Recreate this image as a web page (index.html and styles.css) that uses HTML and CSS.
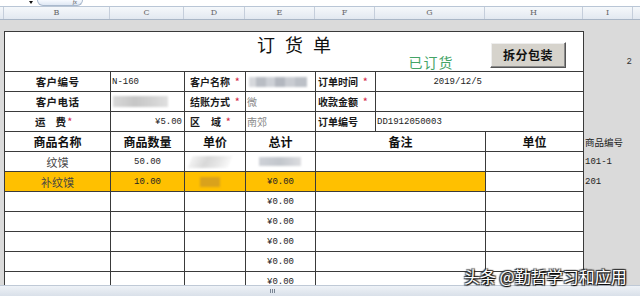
FILE: index.html
```html
<!DOCTYPE html>
<html lang="zh">
<head>
<meta charset="utf-8">
<title>订货单</title>
<link rel="stylesheet" href="styles.css">
</head>
<body>
<div class="app">
  <div class="fbar">
    <span class="nb-arrow"></span>
    <div class="fx-pill"><span class="fx">fx</span></div>
  </div>
  <div class="colhead">
    <div class="ch w-a"></div>
    <div class="ch w-b">B</div>
    <div class="ch w-c">C</div>
    <div class="ch w-d">D</div>
    <div class="ch w-e">E</div>
    <div class="ch w-f">F</div>
    <div class="ch w-g">G</div>
    <div class="ch w-h">H</div>
    <div class="ch w-i">I</div>
    <div class="ch w-j"></div>
  </div>
  <div class="sheet">
    <div class="gutter"></div>
    <div class="form">
      <div class="c title">订货单</div>
      <div class="status">已订货</div>
      <div class="btn-cell"><button class="btn">拆分包装</button></div>

      <div class="c lbl center">客户编号</div>
      <div class="c val mono">N-160</div>
      <div class="c lbl2">客户名称<i class="req">*</i></div>
      <div class="c val"><span class="blur blur-name"></span></div>
      <div class="c lbl3">订单时间<i class="req">*</i></div>
      <div class="c val mono span2 date">2019/12/5</div>

      <div class="c lbl center">客户电话</div>
      <div class="c val"><span class="blur blur-phone"></span></div>
      <div class="c lbl2">结账方式<i class="req">*</i></div>
      <div class="c val soft">微</div>
      <div class="c lbl3">收款金额<i class="req">*</i></div>
      <div class="c val span2"></div>

      <div class="c lbl freight"><span class="sp1">运</span>费<i class="req tight">*</i></div>
      <div class="c val mono right">¥5.00</div>
      <div class="c lbl2"><span class="sp2">区</span>域<i class="req">*</i></div>
      <div class="c val soft">南郊</div>
      <div class="c lbl3">订单编号</div>
      <div class="c val mono span2">DD1912050003</div>

      <div class="c head">商品名称</div>
      <div class="c head">商品数量</div>
      <div class="c head">单价</div>
      <div class="c head">总计</div>
      <div class="c head span2">备注</div>
      <div class="c head">单位</div>

      <div class="c data">纹馍</div>
      <div class="c data mono">50.00</div>
      <div class="c data"><span class="blur blur-price"></span></div>
      <div class="c data"><span class="blur blur-total"></span></div>
      <div class="c data span2"></div>
      <div class="c data"></div>

      <div class="c data hl">补纹馍</div>
      <div class="c data mono hl">10.00</div>
      <div class="c data hl"><span class="blur blur-price2"></span></div>
      <div class="c data mono hl">¥0.00</div>
      <div class="c data span2 hl"></div>
      <div class="c data"></div>

      <div class="c data"></div><div class="c data"></div><div class="c data"></div>
      <div class="c data mono">¥0.00</div><div class="c data span2"></div><div class="c data"></div>

      <div class="c data"></div><div class="c data"></div><div class="c data"></div>
      <div class="c data mono">¥0.00</div><div class="c data span2"></div><div class="c data"></div>

      <div class="c data"></div><div class="c data"></div><div class="c data"></div>
      <div class="c data mono">¥0.00</div><div class="c data span2"></div><div class="c data"></div>

      <div class="c data"></div><div class="c data"></div><div class="c data"></div>
      <div class="c data mono">¥0.00</div><div class="c data span2"></div><div class="c data"></div>

      <div class="c data"></div><div class="c data"></div><div class="c data"></div>
      <div class="c data mono">¥0.00</div><div class="c data span2"></div><div class="c data"></div>
    </div>
    <div class="side">
      <div class="s-top"></div>
      <div class="s-num">2</div>
      <div></div>
      <div></div>
      <div></div>
      <div class="s-txt">商品编号</div>
      <div class="s-txt mono">101-1</div>
      <div class="s-txt mono">201</div>
    </div>
  </div>
  <div class="hscroll"><span class="grip"></span></div>
  <div class="watermark">头条 @勤哲学习和应用</div>
</div>
</body>
</html>
```

FILE: styles.css
```css
* { box-sizing: border-box; margin: 0; padding: 0; }

html, body {
  width: 640px;
  height: 296px;
  overflow: hidden;
  background: #dadada;
}

body {
  font-family: "Noto Sans CJK SC", "Noto Sans", sans-serif;
  color: #111;
}

.app {
  position: relative;
  width: 640px;
  height: 296px;
  display: flex;
  flex-direction: column;
}

/* formula bar strip */
.fbar {
  height: 7px;
  background: #fff;
  border-bottom: 1px solid #b9c6d6;
  display: flex;
  align-items: flex-start;
}
.nb-arrow {
  width: 0;
  height: 0;
  margin: 1px 0 0 29px;
  border-top: 3px solid #111;
  border-left: 2.5px solid transparent;
  border-right: 2.5px solid transparent;
}
.fx-pill {
  margin-left: 4px;
  width: 46px;
  height: 6px;
  border: 1px solid #a9b9cd;
  border-top: none;
  border-radius: 0 0 7px 7px;
  background: linear-gradient(#f7faff, #dfe8f4);
  display: flex;
  justify-content: flex-end;
  align-items: center;
}
.fx {
  font: italic 6px/5px "Liberation Serif", serif;
  color: #555;
  margin-right: 5px;
}

/* column header row */
.colhead {
  height: 13px;
  display: flex;
  background: linear-gradient(#f5f8fb, #e2e8f0);
  border-bottom: 1px solid #a9b6c6;
}
.ch {
  border-right: 1px solid #c5cedb;
  font: 8px/12px "DejaVu Serif", serif;
  color: #666;
  text-align: center;
}
.w-a { width: 4px; }
.w-b { width: 106px; }
.w-c { width: 74px; }
.w-d { width: 61px; }
.w-e { width: 70px; }
.w-f { width: 60px; }
.w-g { width: 110px; }
.w-h { width: 98px; }
.w-i { width: 50px; }
.w-j { width: 7px; border-right: none; }

/* sheet area */
.sheet {
  height: 265px;
  padding-top: 11px;
  display: flex;
  align-items: flex-start;
  overflow: hidden;
  background: #dadada;
}
.gutter { width: 4px; flex: none; }

.form {
  flex: none;
  width: 580px;
  display: grid;
  grid-template-columns: 106px 74px 61px 70px 60px 110px 98px;
  grid-template-rows: 40px repeat(12, 20px);
  border-left: 1px solid #3a3a3a;
  border-top: 1px solid #3a3a3a;
  background: #fff;
}

.c {
  border-right: 1px solid #3a3a3a;
  border-bottom: 1px solid #3a3a3a;
  display: flex;
  align-items: center;
  white-space: nowrap;
  overflow: hidden;
  font-size: 10px;
}
.span2 { grid-column: span 2; }

.title {
  grid-row: 1;
  grid-column: 1 / -1;
  align-items: flex-start;
  justify-content: center;
  overflow: visible;
  padding: 1px 0 0 10px;
  font-size: 18px;
  line-height: 22px;
  letter-spacing: 10px;
  color: #111;
}
.status {
  grid-row: 1;
  grid-column: 6;
  align-self: end;
  justify-self: center;
  margin-bottom: 2px;
  font-size: 14px;
  line-height: 16px;
  letter-spacing: 1px;
  color: #44a466;
}
.btn-cell {
  grid-row: 1;
  grid-column: 7;
  padding: 9px 0 0 4px;
}
.btn {
  width: 76px;
  height: 26px;
  background: #d6d3cc;
  border: 1px solid;
  border-color: #ffffff #555 #555 #ffffff;
  box-shadow: inset -1px -1px 0 #8a8a8a, inset 1px 1px 0 #eeeeee;
  font-family: "Noto Sans CJK SC", sans-serif;
  font-weight: 700;
  font-size: 12px;
  letter-spacing: 0.5px;
  color: #111;
}

/* info labels */
.lbl { font-weight: 700; font-size: 10.5px; letter-spacing: 0.4px; color: #1a1a1a; }
.center { justify-content: center; }
.lbl2 { font-weight: 700; padding-left: 5px; font-size: 10px; color: #1a1a1a; }
.lbl3 { font-weight: 700; padding-left: 2px; font-size: 10px; color: #1a1a1a; }
.freight { padding-left: 30px; }
.sp1 { letter-spacing: 10px; }
.sp2 { letter-spacing: 11px; }
.req {
  font-style: normal;
  color: #d6304f;
  font-size: 9px;
  margin-left: 5px;
  font-weight: 700;
}
.req.tight { margin-left: 1px; }

.val { font-size: 10px; color: #333; padding-left: 1px; }
.mono { font-family: "Liberation Mono", "DejaVu Sans Mono", monospace; font-size: 9px; color: #222; }
.right { justify-content: flex-end; padding-right: 2px; }
.date { justify-content: flex-end; padding-right: 101px; }
.soft { color: #8a8a8a; font-size: 10px; }

/* table head & data */
.head { justify-content: center; font-weight: 700; font-size: 12px; color: #111; }
.data { justify-content: center; font-size: 11px; color: #444; }
.data.mono { font-size: 9px; color: #222; }
.hl { background: #ffc000; }

/* blurred bits */
.blur { display: block; filter: blur(1.2px); }
.blur-name {
  width: 58px;
  height: 10px;
  margin-left: 2px;
  background: linear-gradient(90deg, #d6d8dc 0 12%, #b9bdc4 12% 30%, #cdd0d6 30% 45%, #b3b7bf 45% 62%, #c9ccd2 62% 80%, #bcc0c7 80% 100%);
}
.blur-phone {
  width: 55px;
  height: 11px;
  margin-left: 1px;
  background: linear-gradient(90deg, #d8d8d8, #c6c6c6 40%, #d2d2d2 70%, #e0e0e0);
}
.blur-price {
  width: 40px;
  height: 12px;
  margin-left: -10px;
  background: linear-gradient(100deg, #f4f4f4, #d8d8d8 40%, #e6e6e6 70%, #fafafa);
  transform: skewX(-20deg);
}
.blur-total {
  width: 42px;
  height: 9px;
  margin-left: -2px;
  background: linear-gradient(90deg, #cfd2d8, #c2c6cc 50%, #dcdde0);
}
.blur-price2 {
  width: 20px;
  height: 10px;
  margin-left: -10px;
  background: #d9a21c;
}

/* column I */
.side {
  flex: none;
  width: 56px;
  display: grid;
  grid-template-rows: 1px 40px repeat(6, 20px);
}
.s-num {
  align-self: end;
  justify-self: end;
  margin: 0 8px 5px 0;
  font: 9px/10px "Liberation Mono", monospace;
  color: #333;
}
.s-txt {
  display: flex;
  align-items: center;
  padding-left: 1px;
  font-size: 9.5px;
  color: #222;
}
.s-txt.mono { font-size: 9px; }

/* bottom scrollbar */
.hscroll {
  height: 11px;
  border-top: 1px solid #bfc9d6;
  background: linear-gradient(#eef2f7, #d9e0e9);
  display: flex;
  align-items: center;
}
.grip {
  margin-left: 270px;
  width: 5px;
  height: 4px;
  background: repeating-linear-gradient(90deg, #7a8594 0 1px, transparent 1px 2px);
}

/* overlay watermark */
.watermark {
  position: absolute;
  left: 464px;
  top: 267px;
  font-size: 16px;
  line-height: 18px;
  color: #fff;
  white-space: nowrap;
  text-shadow: 1px 1px 1px #000, -1px -1px 1px #333, 1px -1px 1px #333, -1px 1px 1px #333;
}
```
